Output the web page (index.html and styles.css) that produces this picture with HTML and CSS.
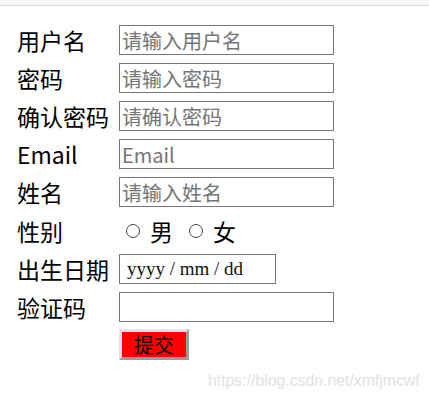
FILE: index.html
```html
<!DOCTYPE html>
<html lang="zh-CN">
<head>
<meta charset="utf-8">
<title>注册</title>
<link rel="stylesheet" href="styles.css">
</head>
<body>
<div class="topbar"></div>
<form class="reg-form">
  <label class="lbl" for="u">用户名</label>
  <input class="field" id="u" type="text" placeholder="请输入用户名">

  <label class="lbl" for="p">密码</label>
  <input class="field" id="p" type="text" placeholder="请输入密码">

  <label class="lbl" for="p2">确认密码</label>
  <input class="field" id="p2" type="text" placeholder="请确认密码">

  <label class="lbl lbl-latin" for="e">Email</label>
  <input class="field" id="e" type="text" placeholder="Email">

  <label class="lbl" for="n">姓名</label>
  <input class="field" id="n" type="text" placeholder="请输入姓名">

  <span class="lbl">性别</span>
  <div class="gender">
    <label class="opt"><input class="radio" type="radio" name="sex"><span>男</span></label>
    <label class="opt"><input class="radio" type="radio" name="sex"><span>女</span></label>
  </div>

  <label class="lbl" for="d">出生日期</label>
  <input class="field date" id="d" type="text" placeholder="yyyy / mm / dd">

  <label class="lbl" for="c">验证码</label>
  <input class="field" id="c" type="text">

  <span class="lbl"></span>
  <div class="actions"><button class="submit" type="button">提交</button></div>
</form>
<div class="watermark">https://blog.csdn.net/xmfjmcwf</div>
</body>
</html>
```

FILE: styles.css
```css
html, body {
  margin: 0;
  padding: 0;
  background: #ffffff;
}
body {
  position: relative;
  width: 429px;
  height: 400px;
  overflow: hidden;
  font-family: "Noto Sans CJK SC", "Noto Sans", sans-serif;
}
.topbar {
  height: 5px;
  background: #f8f8f8;
  border-bottom: 1px solid #dcdcdc;
}
.reg-form {
  display: grid;
  grid-template-columns: 102px auto;
  row-gap: 8px;
  padding: 19px 0 0 17px;
  align-items: center;
  justify-items: start;
}
.lbl {
  font-size: 23px;
  line-height: 30px;
  color: #000;
  white-space: nowrap;
}
.field {
  box-sizing: border-box;
  width: 215px;
  height: 30px;
  margin: 0;
  padding: 0 2px;
  border: 1px solid #767676;
  border-radius: 0;
  font-family: "Noto Sans CJK SC", "Noto Sans", sans-serif;
  font-size: 20px;
  color: #000;
  outline: none;
}
.field::placeholder {
  color: #757575;
}
.field.date {
  width: 157px;
  padding-left: 7px;
  font-family: "Liberation Serif", "Times New Roman", serif;
  font-size: 19px;
}
.field.date::placeholder {
  color: #111;
}
.gender {
  display: flex;
  align-items: center;
  height: 31px;
  padding-left: 7px;
}
.opt {
  display: flex;
  align-items: center;
  font-size: 23px;
  margin-right: 16px;
}
.radio {
  appearance: none;
  -webkit-appearance: none;
  flex: none;
  box-sizing: border-box;
  width: 14px;
  height: 14px;
  margin: 0 10px 0 0;
  border: 1px solid #444;
  border-radius: 50%;
  background: #fff;
}
.radio:checked {
  background: radial-gradient(circle, #333 0 3px, #fff 3.5px);
}
.submit {
  width: 70px;
  height: 31px;
  margin-top: -1px;
  padding: 0;
  background: #ff0000;
  border: 3px solid;
  border-color: #e3e3e3 #9c9c9c #9c9c9c #e3e3e3;
  font-family: "Noto Sans CJK SC", sans-serif;
  font-size: 20px;
  line-height: 23px;
  color: #000;
}
.watermark {
  position: absolute;
  left: 208px;
  top: 372px;
  font-family: "Liberation Sans", Arial, sans-serif;
  font-size: 15.8px;
  color: #e2e2e2;
  white-space: nowrap;
}
```
